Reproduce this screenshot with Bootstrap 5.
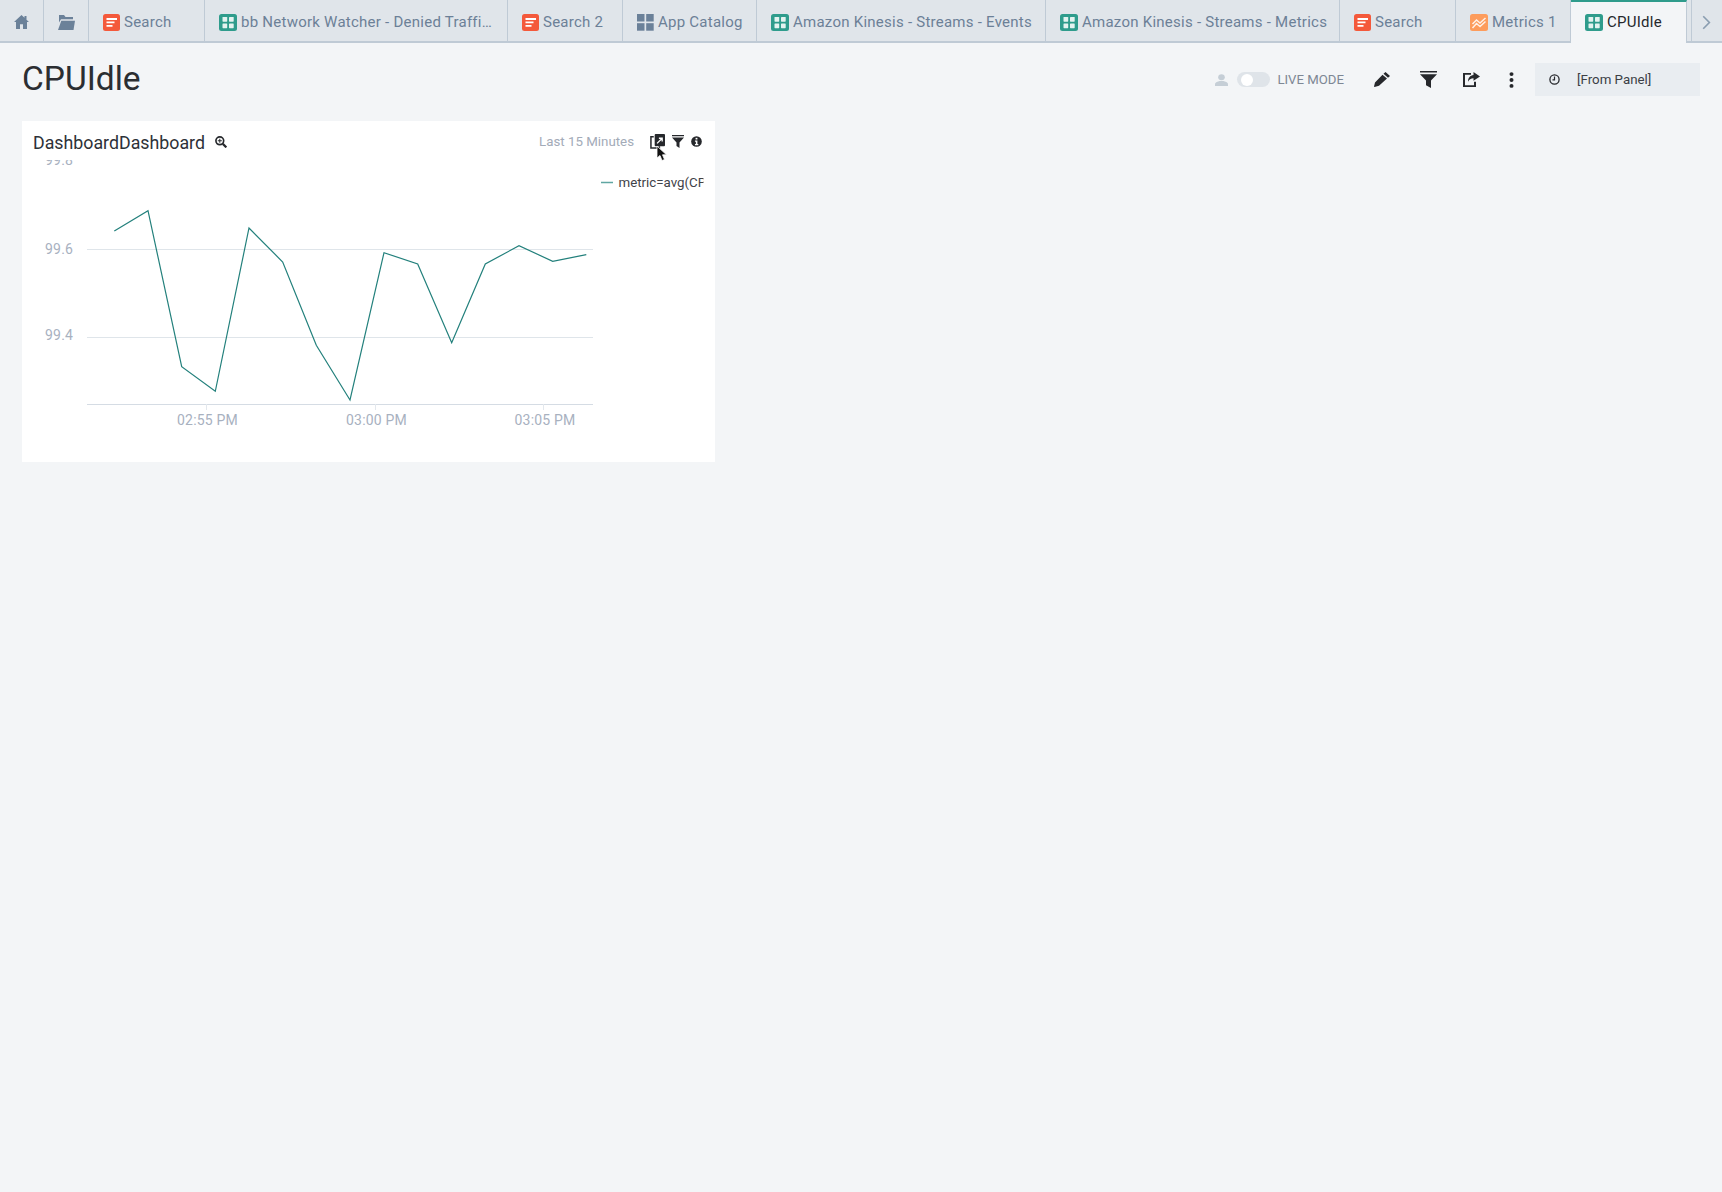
<!doctype html>
<html lang="en">
<head>
<meta charset="utf-8">
<title>CPUIdle</title>
<link href="https://cdn.jsdelivr.net/npm/bootstrap@5.3.0/dist/css/bootstrap.min.css" rel="stylesheet">
<style>
html,body{height:100%}
body{background:#f3f5f7;font-family:Roboto,"Liberation Sans",sans-serif;color:#2d3036;min-height:1192px}
.tabstrip{height:43px;background:#e0e5ea;border-bottom:2px solid #bfcad5;flex-wrap:nowrap}
.tabitem{height:41px;border-right:1px solid #bfcad5;color:#6c8097;font-size:15px;letter-spacing:.25px;padding:3px 0 0 14px;gap:4px;white-space:nowrap;flex:none;overflow:hidden}
.tabitem svg{flex:none}
.tab-home{width:44px;padding-left:14px}
.tab-folder{width:45px;padding-left:14px}
.w-116{width:116px}.w-303{width:303px}.w-115{width:115px}.w-134{width:134px}.w-289{width:289px}.w-294{width:294px}
.tab-active{background:#f3f5f7;height:43px;width:116px;color:#25282d;border-top:2px solid #2f9c8c;padding-top:0;margin-bottom:-2px}
.tab-next{width:32px;margin-left:4px;border-left:1px solid #bfcad5;border-right:0;padding-left:10px}
.pagehead{height:78px;padding:20px 22px 0 22px;align-items:flex-start}
.pagetitle{font-size:33.500px;font-weight:400;line-height:36px;margin:-2px 0 0 0;color:#2b2e32}
.tools{height:33px}
.livetext{font-size:13.200px;color:#7d8794;margin-left:7px;font-weight:400}
.switcher{width:33px;height:15px;border-radius:8px;background:#dfe4e9;margin-left:9px;padding:1.500px 0 0 4px}
.knob{width:12px;height:12px;border-radius:50%;background:#fff}
.sp30{margin-left:30px}.sp26{margin-left:26px}.sp29{margin-left:29px}
.timebox{width:165px;height:33px;background:#e9edf1;margin-left:21px;padding-left:14px;font-size:13.300px;color:#3b3f45}
.timebox span{margin-left:17px}
.panelcard{width:693px;height:341px;margin-left:22px;border:0;border-radius:0;background:#fff;position:relative}
.panelhead{height:39px;padding:0 13px 0 11px}
.paneltitle{font-size:17.800px;color:#2d3138;line-height:1;margin-top:5px}
.magicon{margin-left:10px;margin-top:3px}
.rangetext{font-size:13.300px;color:#a3abb8;margin-right:16px;margin-top:2px}
.actionicon{margin-top:2px}
.gap7{margin-left:7px}
.chart{display:block}
.axis-text{font-family:Roboto,"Liberation Sans",sans-serif;font-size:14px;fill:#a8b1bf;letter-spacing:.2px}
.legend-text{font-family:Roboto,"Liberation Sans",sans-serif;font-size:13.300px;fill:#3f4349}
.pointer{position:absolute;left:634px;top:24px}
</style>
</head>
<body>
<svg width="0" height="0" class="d-block position-absolute">
  <symbol id="i-search" viewBox="0 0 17 17"><rect width="17" height="17" rx="2.500" fill="#f4593b"/><path d="M3.500 4h10.500v2H3.500zM3.500 7.500h8v1.800h-8zM3.500 11h6v1.800h-6z" fill="#fff"/></symbol>
  <symbol id="i-dash" viewBox="0 0 18 17"><rect width="18" height="17" rx="2.500" fill="#2f9c8c"/><rect x="3.500" y="3" width="4.700" height="4.700" rx=".6" fill="#e4f3f0"/><rect x="10" y="3" width="4.700" height="4.700" rx=".6" fill="#e4f3f0"/><rect x="3.500" y="9.500" width="4.700" height="4.700" rx=".6" fill="#e4f3f0"/><rect x="10" y="9.500" width="4.700" height="4.700" rx=".6" fill="#e4f3f0"/></symbol>
  <symbol id="i-apps" viewBox="0 0 17 17"><rect width="7.500" height="7.500" fill="#6b8199"/><rect x="9.200" width="7.500" height="7.500" fill="#6b8199"/><rect y="9.200" width="7.500" height="7.500" fill="#6b8199"/><rect x="9.200" y="9.200" width="7.500" height="7.500" fill="#6b8199"/></symbol>
  <symbol id="i-metrics" viewBox="0 0 18 17"><rect width="18" height="17" rx="2.500" fill="#fd9c5c"/><path d="M2.500 10l4-4 3.500 3 5.500-5M2.500 14l4-4.500 3.500 3 5.500-5" fill="none" stroke="#fff" stroke-width="1.500" opacity=".85"/></symbol>
</svg>

<nav class="nav tabstrip">
  <a class="nav-link d-flex align-items-center tabitem tab-home" aria-label="Home"><svg width="15" height="14" viewBox="0 0 15 15" preserveAspectRatio="none"><path d="M7.500 0L0 7.500h2V15h4v-5h3v5h4V7.500h2L12.500 5V1h-2v2z" fill="#6b8199"/></svg></a>
  <a class="nav-link d-flex align-items-center tabitem tab-folder" aria-label="Folders"><svg width="17" height="15" viewBox="0 0 17 16" preserveAspectRatio="none"><path d="M1 0h5l1.500 2H15v2.500H3L1 8z" fill="#6b8199"/><path d="M3.300 6H17l-1.500 10H0z" fill="#6b8199"/></svg></a>
  <a class="nav-link d-flex align-items-center tabitem w-116"><svg width="17" height="17"><use href="#i-search"/></svg>Search</a>
  <a class="nav-link d-flex align-items-center tabitem w-303"><svg width="18" height="17"><use href="#i-dash"/></svg>bb Network Watcher - Denied Traffi…</a>
  <a class="nav-link d-flex align-items-center tabitem w-115"><svg width="17" height="17"><use href="#i-search"/></svg>Search 2</a>
  <a class="nav-link d-flex align-items-center tabitem w-134"><svg width="17" height="17"><use href="#i-apps"/></svg>App Catalog</a>
  <a class="nav-link d-flex align-items-center tabitem w-289"><svg width="18" height="17"><use href="#i-dash"/></svg>Amazon Kinesis - Streams - Events</a>
  <a class="nav-link d-flex align-items-center tabitem w-294"><svg width="18" height="17"><use href="#i-dash"/></svg>Amazon Kinesis - Streams - Metrics</a>
  <a class="nav-link d-flex align-items-center tabitem w-116"><svg width="17" height="17"><use href="#i-search"/></svg>Search</a>
  <a class="nav-link d-flex align-items-center tabitem w-115"><svg width="18" height="17"><use href="#i-metrics"/></svg>Metrics 1</a>
  <a class="nav-link d-flex align-items-center tabitem tab-active"><svg width="18" height="17"><use href="#i-dash"/></svg>CPUIdle</a>
  <a class="nav-link d-flex align-items-center tabitem tab-next" aria-label="Next"><svg width="9" height="15" viewBox="0 0 11 18" preserveAspectRatio="none"><path d="M1.500 1.500L9 9l-7.500 7.500" fill="none" stroke="#8a9db0" stroke-width="2"/></svg></a>
</nav>

<header class="d-flex pagehead">
  <h1 class="pagetitle">CPUIdle</h1>
  <div class="d-flex align-items-center ms-auto tools">
    <svg width="13" height="12" viewBox="0 0 13 13" preserveAspectRatio="none"><circle cx="6.500" cy="3.500" r="3.300" fill="#c5ced6"/><path d="M0 13v-2c0-2 3-3 4.500-3.500h4C10 8 13 9 13 11v2z" fill="#c5ced6"/></svg>
    <div class="switcher"><div class="knob"></div></div>
    <span class="livetext">LIVE MODE</span>
    <svg class="sp30" width="16" height="15" viewBox="0 0 16 17" preserveAspectRatio="none"><path d="M11.500 0L16 4.500 14 6.500 9.500 2zM8.500 3L13 7.500 5 15.500.5 17 0 16.500 1 12z" fill="#26282c"/></svg>
    <svg class="sp30" width="17" height="17" viewBox="0 0 17 19" preserveAspectRatio="none"><path d="M0 0h17v1.800H0zM0 3.500h17l-6 7V19l-5-3v-5.500z" fill="#26282c"/></svg>
    <svg class="sp26" width="17" height="15" viewBox="0 0 17 17" preserveAspectRatio="none"><path d="M8 2H1v14h11v-5" fill="none" stroke="#26282c" stroke-width="2"/><path d="M10.500 0L17 5l-6.500 5V7C8 7 6 8.500 5 11c0-4 2-7 5.500-7.500z" fill="#26282c"/></svg>
    <svg class="sp29" width="5" height="16" viewBox="0 0 5 17" preserveAspectRatio="none"><circle cx="2.500" cy="2.200" r="2" fill="#26282c"/><circle cx="2.500" cy="8.500" r="2" fill="#26282c"/><circle cx="2.500" cy="14.800" r="2" fill="#26282c"/></svg>
    <div class="d-flex align-items-center timebox">
      <svg width="11" height="11" viewBox="0 0 11 11"><circle cx="5.500" cy="5.500" r="4.600" fill="none" stroke="#26282c" stroke-width="1.300"/><path d="M5.500 2.500v3.300h-2" fill="none" stroke="#26282c" stroke-width="1.200"/></svg>
      <span>[From Panel]</span>
    </div>
  </div>
</header>

<section class="card panelcard">
  <div class="d-flex align-items-center panelhead">
    <span class="paneltitle">DashboardDashboard</span>
    <svg class="magicon" width="12" height="12" viewBox="0 0 13 13"><circle cx="5.200" cy="5.200" r="4.200" fill="none" stroke="#26282c" stroke-width="1.800"/><path d="M8.500 8.500L12.300 12.300" stroke="#26282c" stroke-width="2.400"/><path d="M5.200 3v4.400M3 5.200h4.400" stroke="#26282c" stroke-width="1.100"/></svg>
    <span class="ms-auto rangetext">Last 15 Minutes</span>
    <svg class="actionicon" width="15" height="15" viewBox="0 0 16 16" preserveAspectRatio="none"><path d="M4 3H1v12h9v-2" fill="none" stroke="#26282c" stroke-width="1.600"/><rect x="5" y="0" width="11" height="13" rx="1" fill="#26282c"/><path d="M7.500 10l5-5M9.500 4.500H13V8" fill="none" stroke="#fff" stroke-width="1.400"/></svg>
    <svg class="gap7 actionicon" width="12" height="13" viewBox="0 0 12 13"><path d="M0 0h12v1.300H0zM0 2.500h12L7.500 7.500V13l-3-2V7.500z" fill="#26282c"/></svg>
    <svg class="gap7 actionicon" width="11" height="11" viewBox="0 0 12 12"><circle cx="6" cy="6" r="5.800" fill="#26282c"/><rect x="5" y="2" width="2" height="1.800" fill="#fff"/><path d="M4.300 5h2.700v3.600h1V10H4.300V8.600h1V6.300h-1z" fill="#fff"/></svg>
  </div>
  <svg class="chart" width="693" height="302" viewBox="22 160 693 302">
    <defs><clipPath id="legclip"><rect x="600" y="170" width="103.500" height="24"/></clipPath></defs>
    <path d="M87 249.500H593M87 337.500H593" stroke="#dfe5ea" stroke-width="1"/>
    <path d="M87 404.500H593" stroke="#d5dce4" stroke-width="1"/>
    <path d="M206.500 404v6M375.500 404v6M543.500 404v6" stroke="#e3e8ed" stroke-width="1"/>
    <text class="axis-text" x="45" y="165">99.8</text>
    <text class="axis-text" x="45" y="254">99.6</text>
    <text class="axis-text" x="45" y="340">99.4</text>
    <text class="axis-text" x="177" y="425">02:55 PM</text>
    <text class="axis-text" x="346" y="425">03:00 PM</text>
    <text class="axis-text" x="514.500" y="425">03:05 PM</text>
    <polyline fill="none" stroke="#23807c" stroke-width="1.200" points="114.300,231 148,210.700 181.700,366.700 215.300,391.300 249,228 282.700,262 316.300,345.300 350,400 384,252.700 417.700,264 451.700,342.700 485.300,264 519,245.700 552.700,261.300 586.300,254.700"/>
    <path d="M601 182.500H613" stroke="#5fa6a2" stroke-width="1.500"/>
    <text class="legend-text" x="618.500" y="187" clip-path="url(#legclip)">metric=avg(CPUIdle)</text>
  </svg>
  <svg class="pointer" width="12" height="17" viewBox="0 0 12 17"><path d="M1 1v12l3-2.500 2 5 2.500-1-2-4.700H10.500z" fill="#111" stroke="#fff" stroke-width=".8"/></svg>
</section>
</body>
</html>
